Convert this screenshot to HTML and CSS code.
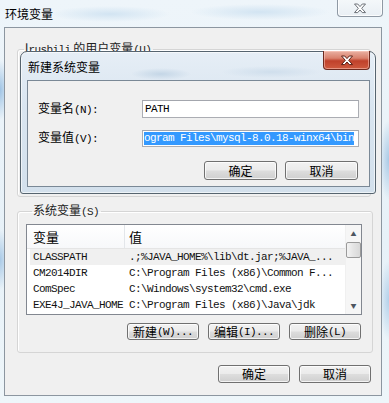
FILE: index.html
```html
<!DOCTYPE html>
<html>
<head>
<meta charset="utf-8">
<link rel="stylesheet" href="styles.css">
</head>
<body>
<div class="window">
  <div class="titlebar">
    <span class="title">环境变量</span>
    <div class="close-outer">
      <svg width="14" height="11" viewBox="0 0 14 11"><path d="M1.5,1 h3.2 l2.3,2.6 l2.3,-2.6 h3.2 l-3.8,4.3 l3.8,4.3 h-3.2 l-2.3,-2.6 l-2.3,2.6 h-3.2 l3.8,-4.3 z" fill="#ffffff" stroke="#6a6f76" stroke-width="1"/></svg>
    </div>
  </div>
  <div class="client">
    <fieldset class="group user-group">
      <legend>l<span class="m">rusbili</span> 的用户变量<span class="m">(U)</span></legend>
    </fieldset>
    <fieldset class="group sys-group">
      <legend>系统变量<span class="m">(S)</span></legend>
      <div class="list">
        <div class="table">
          <div class="hrow">
            <div class="hc c1">变量</div>
            <div class="hc c2">值</div>
          </div>
          <div class="row sel"><div class="c1 m">CLASSPATH</div><div class="c2 m">.;%JAVA_HOME%\lib\dt.jar;%JAVA_...</div></div>
          <div class="row"><div class="c1 m">CM2014DIR</div><div class="c2 m">C:\Program Files (x86)\Common F...</div></div>
          <div class="row"><div class="c1 m">ComSpec</div><div class="c2 m">C:\Windows\system32\cmd.exe</div></div>
          <div class="row"><div class="c1 m">EXE4J_JAVA_HOME</div><div class="c2 m">C:\Program Files (x86)\Java\jdk</div></div>
        </div>
        <div class="vscroll">
          <div class="arrow">▲</div>
          <div class="thumb"></div>
          <div class="track"></div>
          <div class="arrow">▼</div>
        </div>
      </div>
      <div class="btnrow">
        <button class="btn small">新建<span class="m">(W)...</span></button>
        <button class="btn small">编辑<span class="m">(I)...</span></button>
        <button class="btn small">删除<span class="m">(L)</span></button>
      </div>
    </fieldset>
    <div class="btnrow bottom">
      <button class="btn">确定</button>
      <button class="btn">取消</button>
    </div>
  </div>

  <div class="dialog">
    <div class="dtitle">
      <span class="title">新建系统变量</span>
      <div class="close-red">
        <svg width="14" height="11" viewBox="0 0 14 11"><path d="M1.5,1 h3.2 l2.3,2.6 l2.3,-2.6 h3.2 l-3.8,4.3 l3.8,4.3 h-3.2 l-2.3,-2.6 l-2.3,2.6 h-3.2 l3.8,-4.3 z" fill="#ffffff" stroke="#5a1e14" stroke-width="1"/></svg>
      </div>
    </div>
    <div class="dclient">
      <div class="form">
        <label class="lbl">变量名<span class="m">(N):</span></label>
        <div class="input"><span class="m">PATH</span></div>
        <label class="lbl">变量值<span class="m">(V):</span></label>
        <div class="input sel-input"><span class="m selected">ogram Files\mysql-8.0.18-winx64\bin</span></div>
      </div>
      <div class="btnrow dbtns">
        <button class="btn big">确定</button>
        <button class="btn big">取消</button>
      </div>
    </div>
  </div>
</div>
</body>
</html>
```

FILE: styles.css
```css
* { box-sizing: border-box; }
html, body { margin: 0; padding: 0; }
body {
  width: 389px;
  height: 403px;
  overflow: hidden;
  font-family: "Noto Sans CJK SC", sans-serif;
  font-size: 12px;
  color: #000;
  background:
    radial-gradient(ellipse 10px 30px at 0px 90px, #9fc3e4, transparent),
    radial-gradient(ellipse 10px 30px at 0px 260px, #a9c9e6, transparent),
    radial-gradient(ellipse 10px 40px at 389px 160px, #a9c9e6, transparent),
    radial-gradient(ellipse 10px 40px at 389px 300px, #b3d0ea, transparent),
    radial-gradient(ellipse 60px 8px at 110px 14px, #d2e4f2, transparent),
    radial-gradient(ellipse 70px 8px at 260px 12px, #d2e4f2, transparent),
    linear-gradient(#eef5fa, #e7f1f8 60%, #eef6fa);
}
.m {
  font-family: "Liberation Mono", monospace;
  font-size: 11px;
  letter-spacing: -0.6px;
}
.window { position: relative; width: 389px; height: 403px; }

.titlebar {
  height: 27px;
  display: flex;
  align-items: flex-start;
  justify-content: space-between;
}
.titlebar .title {
  padding-left: 5px;
  line-height: 28px;
  font-size: 12px;
  color: #000;
}
.close-outer {
  margin-top: -3px;
  margin-right: 6px;
  width: 46px;
  height: 20px;
  border: 1px solid #8f99a4;
  border-top: none;
  border-radius: 0 0 4px 4px;
  background: linear-gradient(#f6f9fb, #e9eff4);
  box-shadow: inset 0 0 0 1px rgba(255,255,255,0.8);
  display: flex;
  align-items: center;
  justify-content: center;
  padding-top: 3px;
}

.client {
  margin: 0 7px 0 4px;
  height: 369px;
  border: 1px solid #8c96a0;
  background: #f0f0f0;
  padding: 0 10px 0 12px;
  display: flex;
  flex-direction: column;
}

.group {
  margin: 0;
  border: 1px solid #d5d5d5;
  border-radius: 3px;
  box-shadow: 1px 1px 0 #fff inset;
  padding: 0;
  min-width: 0;
}
.group legend {
  margin-left: 6px;
  padding: 0 2px 0 1px;
  line-height: 12px;
  font-size: 12px;
  color: #222;
}
.user-group {
  margin-top: 14px;
  height: 155px;
}
.sys-group {
  margin-top: 7px;
  width: 356px;
  margin-left: 0;
  padding: 6px 10px 12px 8px;
}

.list {
  width: 336px;
  height: 91px;
  border: 1px solid #828790;
  background: #fff;
  display: flex;
  overflow: hidden;
}
.table { flex: 1; min-width: 0; }
.hrow {
  height: 24px;
  display: flex;
  align-items: center;
  background: linear-gradient(#ffffff, #f7f8fa);
  border-bottom: 1px solid #e5e5e5;
}
.hc { font-size: 13px; line-height: 23px; height: 23px; }
.c1 { width: 98px; padding-left: 6px; white-space: nowrap; overflow: hidden; }
.c2 { flex: 1; padding-left: 4px; white-space: nowrap; overflow: hidden; }
.hrow .c1 { border-right: 1px solid #e3e6ea; }
.row {
  height: 16px;
  display: flex;
  align-items: center;
  line-height: 16px;
  color: #111;
}
.row.sel { background: #f0f0f0; margin-left: 3px; }
.row.sel .c1 { width: 95px; padding-left: 3px; }

.vscroll {
  width: 16px;
  display: flex;
  flex-direction: column;
  align-items: center;
  background: #f6f6f6;
  border-left: 1px solid #f0f0f0;
}
.arrow {
  height: 17px;
  font-size: 6px;
  line-height: 17px;
  color: #4d5560;
}
.thumb {
  width: 15px;
  height: 16px;
  border: 1px solid #9a9a9a;
  border-radius: 2px;
  background: linear-gradient(90deg, #f3f3f3, #e4e4e4 50%, #d8d8d8);
}
.track { flex: 1; }

.btnrow {
  display: flex;
  justify-content: flex-end;
  gap: 9px;
}
.sys-group .btnrow { margin-top: 8px; margin-right: 1px; }
.btn {
  margin: 0;
  padding: 0;
  width: 72px;
  height: 18px;
  border: 1px solid #707070;
  border-radius: 3px;
  background: linear-gradient(#f2f2f2 0%, #ebebeb 48%, #dddddd 52%, #cfcfcf 100%);
  box-shadow: inset 0 0 0 1px rgba(255,255,255,0.75);
  font-family: "Noto Sans CJK SC", sans-serif;
  font-size: 12px;
  color: #000;
  line-height: 14px;
  display: flex;
  align-items: center;
  justify-content: center;
}
.btn.small { height: 17px; }
.btn.big { width: 73px; height: 19px; }
.bottom { margin-top: 12px; }

/* inner dialog, overlapping the outer one */
.dialog {
  position: absolute;
  left: 20px;
  top: 51px;
  width: 356px;
  height: 143px;
  border: 1px solid #56646f;
  border-radius: 7px 7px 3px 3px;
  background:
    radial-gradient(ellipse 30px 6px at 140px 22px, #c4d6e6, transparent),
    radial-gradient(ellipse 50px 6px at 250px 20px, #cfdeec, transparent),
    linear-gradient(#e6eef6, #d9e5f0 40%, #d3e0ec);
  box-shadow: inset 0 0 0 1px rgba(255,255,255,0.6);
  display: flex;
  flex-direction: column;
}
.dtitle {
  height: 28px;
  display: flex;
  justify-content: space-between;
  align-items: flex-start;
}
.dtitle .title {
  padding-left: 7px;
  line-height: 29px;
}
.close-red {
  margin-right: 5px;
  margin-top: -1px;
  width: 47px;
  height: 19px;
  border: 1px solid #6e2a1f;
  border-top: none;
  border-radius: 0 0 4px 4px;
  background: linear-gradient(#eab1a3 0%, #d9816d 40%, #c0412b 55%, #cf5a3f 100%);
  box-shadow: inset 0 0 0 1px rgba(255,210,200,0.5);
  display: flex;
  align-items: center;
  justify-content: center;
}
.dclient {
  margin: 0 5px 6px 6px;
  flex: 1;
  border: 1px solid #7a8896;
  background: #f0f0f0;
  padding: 18px 11px 0 10px;
}
.form {
  display: grid;
  grid-template-columns: 104px 217px;
  row-gap: 9px;
  align-items: center;
}
.lbl { font-size: 12px; line-height: 18px; }
.input {
  height: 18px;
  border: 1px solid #abadb3;
  border-top-color: #a3a6ad;
  background: #fff;
  display: flex;
  align-items: center;
  padding: 0 2px;
  white-space: nowrap;
  overflow: hidden;
}
.input.sel-input { height: 17px; padding: 0 1px; }
.selected {
  background: #3399ff;
  color: #fff;
  line-height: 13px;
}
.dbtns { margin-top: 13px; gap: 8px; }
```
